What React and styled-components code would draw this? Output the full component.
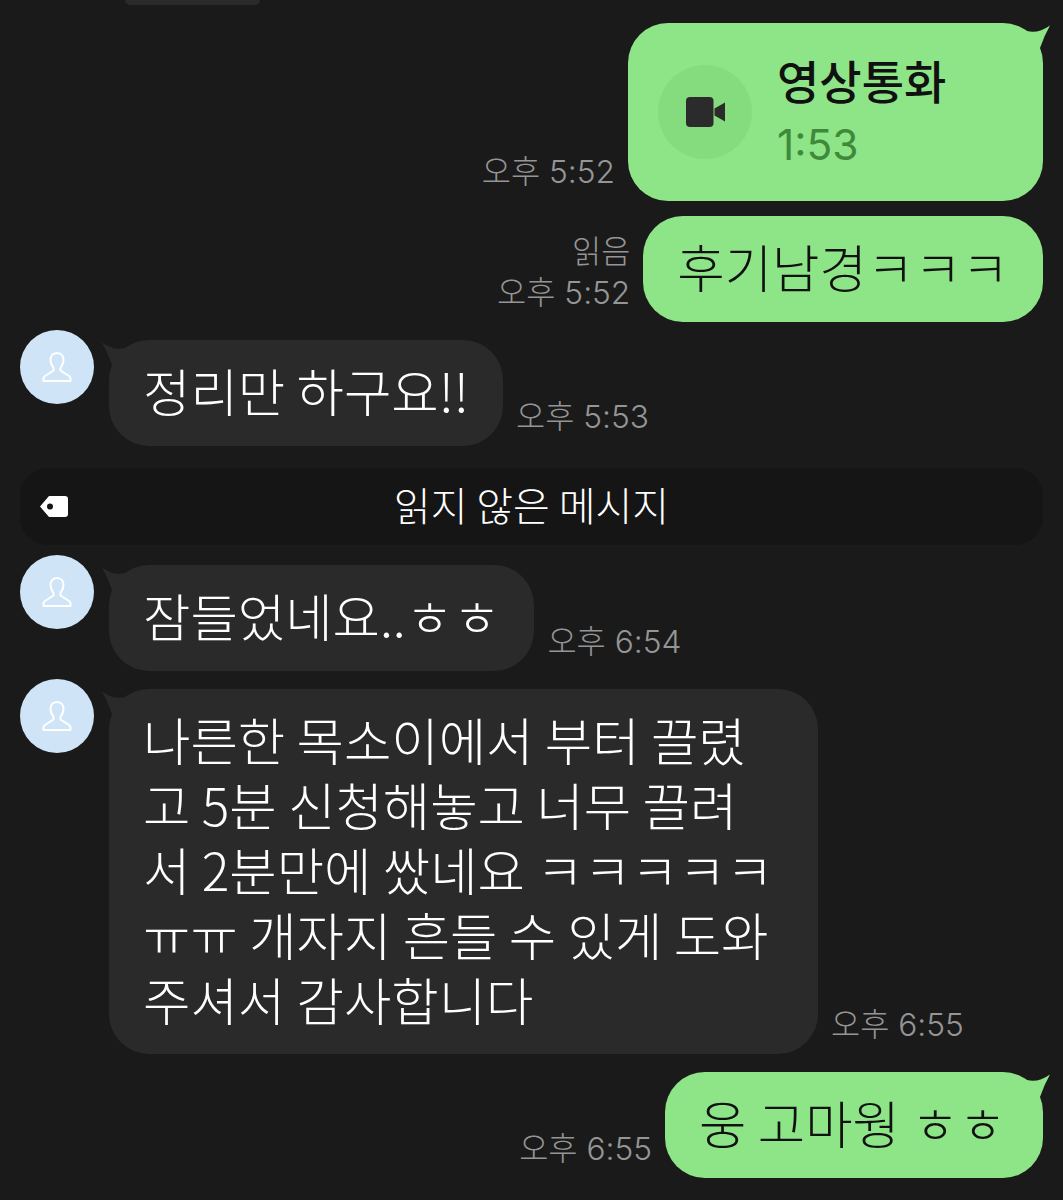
import React from "react";
import styled, { createGlobalStyle } from "styled-components";

const GlobalStyle = createGlobalStyle`
  html, body {
    margin: 0;
    padding: 0;
    background: #1a1a1a;
  }
  body {
    font-family: "Noto Sans CJK KR", "Noto Sans", sans-serif;
  }
`;

const Chat = styled.div`
  width: 1063px;
  height: 1200px;
  overflow: hidden;
  background: #1a1a1a;
  display: flex;
  flex-direction: column;
`;

const PeekBubble = styled.div`
  width: 135px;
  height: 5px;
  margin-left: 125px;
  background: #2a2a2a;
  border-radius: 0 0 30px 30px;
`;

const Row = styled.div`
  display: flex;
  align-items: flex-start;
  justify-content: ${(p) => (p.$mine ? "flex-end" : "flex-start")};
  margin-top: ${(p) => p.$gap}px;
  padding: 0 20px;
`;

const Avatar = styled.div`
  width: 74px;
  height: 74px;
  flex: none;
  margin-right: 15px;
  border-radius: 50%;
  background: #cfe5f7;
  display: flex;
  align-items: center;
  justify-content: center;
`;

const Bubble = styled.div`
  position: relative;
  box-sizing: border-box;
  height: ${(p) => p.$lines * 64.75 + 41.25}px;
  min-width: ${(p) => p.$minWidth || 0}px;
  margin-top: ${(p) => (p.$mine ? 0 : 10)}px;
  padding: 17px 34px 0 34px;
  border-radius: 40px;
  background: ${(p) => (p.$mine ? "#8ee588" : "#2a2a2a")};
  color: ${(p) => (p.$mine ? "#111" : "#fff")};
  font-size: 51.5px;
  font-weight: 300;
  line-height: 65px;
  white-space: nowrap;
`;

const Tail = styled.svg`
  position: absolute;
  top: 0;
  width: 30px;
  height: 30px;
  ${(p) =>
    p.$mine ? "right: -7px;" : "left: -7px; transform: scaleX(-1);"}
`;

const Meta = styled.div`
  display: flex;
  flex-direction: column;
  align-items: flex-end;
  align-self: flex-end;
  margin: ${(p) => (p.$mine ? "0 13px 9px 0" : "0 0 9px 13px")};
  color: #959595;
  font-family: "Inter", "Noto Sans CJK KR", sans-serif;
  font-size: 31.7px;
  font-weight: 300;
  line-height: 41px;
  white-space: nowrap;
`;

const CallBubble = styled.div`
  position: relative;
  box-sizing: border-box;
  display: flex;
  align-items: center;
  width: 415px;
  height: 178px;
  padding: 0 30px;
  border-radius: 40px;
  background: #8ee588;
  color: #111;
`;

const CallIcon = styled.div`
  width: 94px;
  height: 94px;
  flex: none;
  border-radius: 50%;
  background: #84dc7e;
  display: flex;
  align-items: center;
  justify-content: center;
  margin-right: 25px;
`;

const CallText = styled.div`
  display: flex;
  flex-direction: column;
`;

const CallTitle = styled.div`
  font-size: 46px;
  font-weight: 500;
  line-height: 62px;
`;

const CallTime = styled.div`
  margin-top: 4px;
  color: #3f8a3a;
  font-family: "Inter", sans-serif;
  font-size: 42.5px;
  line-height: 62px;
`;

const Divider = styled.div`
  position: relative;
  box-sizing: border-box;
  height: 77px;
  margin: 22px 20px 0;
  padding-bottom: 5px;
  border-radius: 28px;
  background: #151515;
  color: #fff;
  font-size: 40px;
  font-weight: 300;
  display: flex;
  align-items: center;
  justify-content: center;
`;

const TagIcon = styled.svg`
  position: absolute;
  left: 20px;
  top: 28px;
  width: 28px;
  height: 21px;
`;

function BubbleTail({ mine }) {
  return (
    <Tail $mine={mine} viewBox="0 0 30 30">
      <path
        d="M7 8 Q18 11 30 2.5 Q24 13 20 25 L5 25 Z"
        fill={mine ? "#8ee588" : "#2a2a2a"}
      />
    </Tail>
  );
}

function Person() {
  return (
    <svg width="30" height="32" viewBox="0 0 30 32" fill="none" stroke="#fff" strokeWidth="2">
      <path d="M15 2 C10.5 2 8.5 5.5 8.5 9 C8.5 13 10.5 15.5 11.5 17 L11.5 19.5 L3 25 Q1.5 26 1.5 27.5 L1.5 30 L28.5 30 L28.5 27.5 Q28.5 26 27 25 L18.5 19.5 L18.5 17 C19.5 15.5 21.5 13 21.5 9 C21.5 5.5 19.5 2 15 2 Z" strokeLinejoin="round" />
    </svg>
  );
}

function Other({ gap, time, lines = 1, minWidth, children }) {
  return (
    <Row $gap={gap}>
      <Avatar>
        <Person />
      </Avatar>
      <Bubble $lines={lines} $minWidth={minWidth}>
        <BubbleTail />
        {children}
      </Bubble>
      <Meta>{time}</Meta>
    </Row>
  );
}

export default function App() {
  return (
    <Chat>
      <GlobalStyle />
      <PeekBubble />

      <Row $mine $gap={18}>
        <Meta $mine>오후 5:52</Meta>
        <CallBubble>
          <BubbleTail mine />
          <CallIcon>
            <svg width="40" height="30" viewBox="0 0 40 30">
              <rect x="1" y="0" width="27.5" height="30" rx="4" fill="#2b2b2b" />
              <path d="M29.5 11.5 L40 5.5 L40 24.5 L29.5 18.5 Z" fill="#2b2b2b" />
            </svg>
          </CallIcon>
          <CallText>
            <CallTitle>영상통화</CallTitle>
            <CallTime>1:53</CallTime>
          </CallText>
        </CallBubble>
      </Row>

      <Row $mine $gap={15}>
        <Meta $mine>
          <span>읽음</span>
          <span>오후 5:52</span>
        </Meta>
        <Bubble $mine $lines={1}>후기남경ㅋㅋㅋ</Bubble>
      </Row>

      <Other gap={8} time="오후 5:53">정리만 하구요!!</Other>

      <Divider>
        <TagIcon viewBox="0 0 28 21">
          <path
            d="M9 0 L25 0 Q28 0 28 3 L28 18 Q28 21 25 21 L9 21 L0 10.5 Z M10 7.5 A3 3 0 1 0 10 13.5 A3 3 0 1 0 10 7.5 Z"
            fill="#fff"
            fillRule="evenodd"
          />
        </TagIcon>
        읽지 않은 메시지
      </Divider>

      <Other gap={10} time="오후 6:54">잠들었네요..ㅎㅎ</Other>

      <Other gap={8} time="오후 6:55" lines={5} minWidth={709}>
        나른한 목소이에서 부터 끌렸
        <br />
        고 5분 신청해놓고 너무 끌려
        <br />
        서 2분만에 쌌네요 ㅋㅋㅋㅋㅋ
        <br />
        ㅠㅠ 개자지 흔들 수 있게 도와
        <br />
        주셔서 감사합니다
      </Other>

      <Row $mine $gap={18}>
        <Meta $mine>오후 6:55</Meta>
        <Bubble $mine $lines={1} $minWidth={378}>
          <BubbleTail mine />웅 고마웡 ㅎㅎ
        </Bubble>
      </Row>
    </Chat>
  );
}
